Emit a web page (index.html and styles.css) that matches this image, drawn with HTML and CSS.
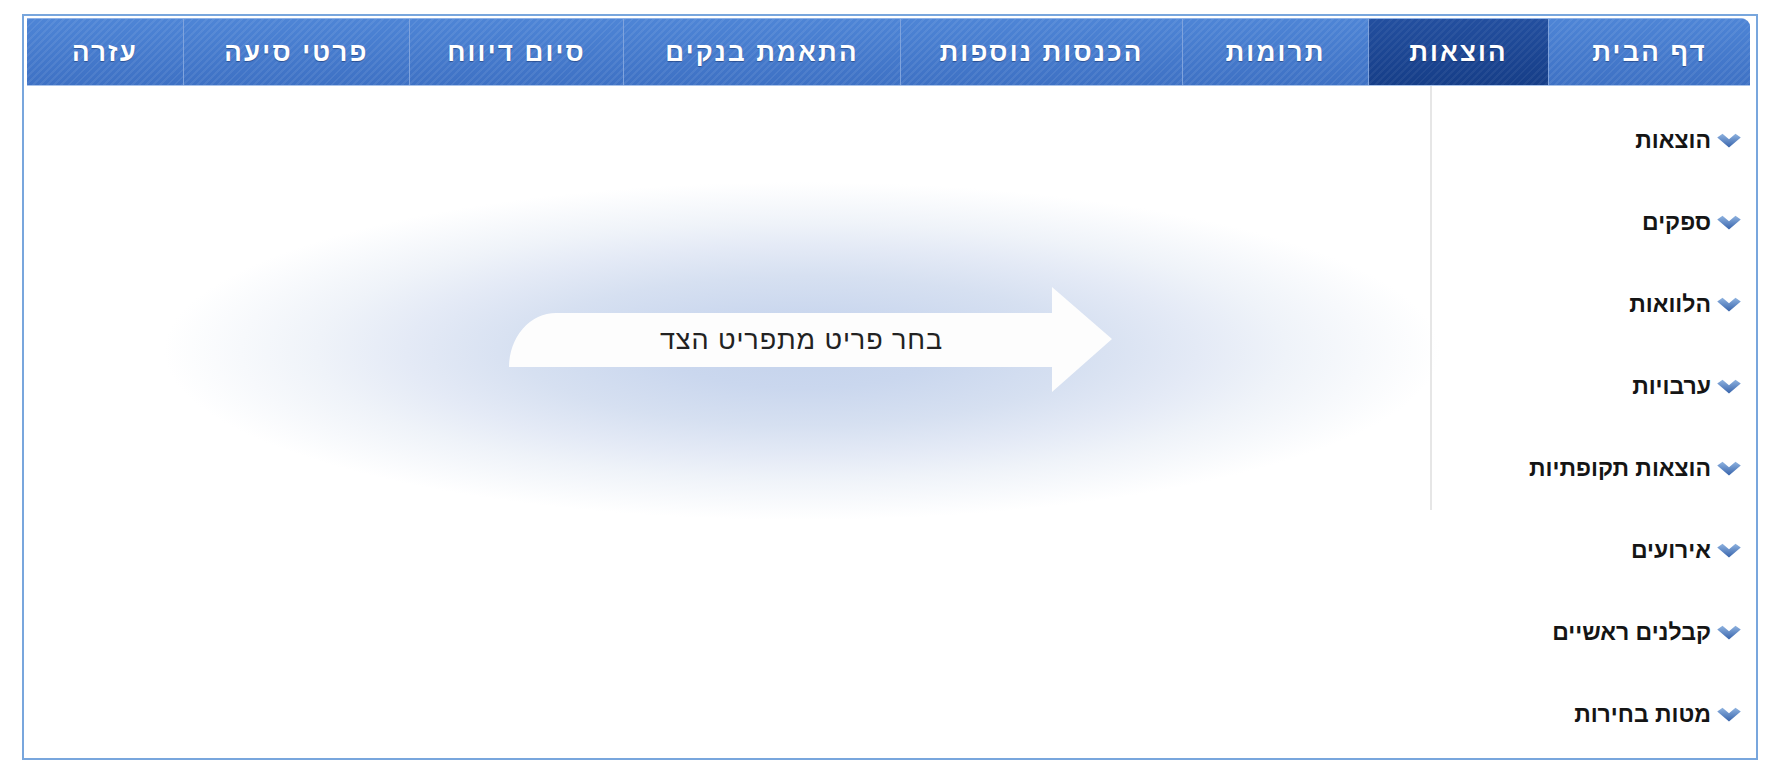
FILE: index.html
```html
<!DOCTYPE html>
<html lang="he">
<head>
<meta charset="utf-8">
<title>תפריט</title>
<link rel="stylesheet" href="styles.css">
</head>
<body>
<div class="frame">
  <nav class="tabs" dir="rtl">
    <div class="tab w-home">דף הבית</div>
    <div class="tab active w-exp">הוצאות</div>
    <div class="tab w-don">תרומות</div>
    <div class="tab w-inc">הכנסות נוספות</div>
    <div class="tab w-bank">התאמת בנקים</div>
    <div class="tab w-end">סיום דיווח</div>
    <div class="tab w-party">פרטי סיעה</div>
    <div class="tab w-help">עזרה</div>
  </nav>
  <div class="content">
    <main class="stage">
      <div class="glow">
        <div class="arrow"><span class="arrow-text" dir="rtl">בחר פריט מתפריט הצד</span></div>
      </div>
    </main>
    <aside class="side" dir="rtl">
      <div class="item"><svg class="chev" viewBox="0 0 20 12"><defs><linearGradient id="cg" x1="0" y1="0" x2="0" y2="1"><stop offset="0" stop-color="#8fb3e0"/><stop offset="1" stop-color="#3763ab"/></linearGradient></defs><path d="M0.2 3.4 L4.6 0.4 L10 5 L15.4 0.4 L19.8 3.4 L10 11.8 Z" fill="url(#cg)"/></svg><span>הוצאות</span></div>
      <div class="item"><svg class="chev" viewBox="0 0 20 12"><path d="M0.2 3.4 L4.6 0.4 L10 5 L15.4 0.4 L19.8 3.4 L10 11.8 Z" fill="url(#cg)"/></svg><span>ספקים</span></div>
      <div class="item"><svg class="chev" viewBox="0 0 20 12"><path d="M0.2 3.4 L4.6 0.4 L10 5 L15.4 0.4 L19.8 3.4 L10 11.8 Z" fill="url(#cg)"/></svg><span>הלוואות</span></div>
      <div class="item"><svg class="chev" viewBox="0 0 20 12"><path d="M0.2 3.4 L4.6 0.4 L10 5 L15.4 0.4 L19.8 3.4 L10 11.8 Z" fill="url(#cg)"/></svg><span>ערבויות</span></div>
      <div class="item"><svg class="chev" viewBox="0 0 20 12"><path d="M0.2 3.4 L4.6 0.4 L10 5 L15.4 0.4 L19.8 3.4 L10 11.8 Z" fill="url(#cg)"/></svg><span>הוצאות תקופתיות</span></div>
      <div class="item"><svg class="chev" viewBox="0 0 20 12"><path d="M0.2 3.4 L4.6 0.4 L10 5 L15.4 0.4 L19.8 3.4 L10 11.8 Z" fill="url(#cg)"/></svg><span>אירועים</span></div>
      <div class="item"><svg class="chev" viewBox="0 0 20 12"><path d="M0.2 3.4 L4.6 0.4 L10 5 L15.4 0.4 L19.8 3.4 L10 11.8 Z" fill="url(#cg)"/></svg><span>קבלנים ראשיים</span></div>
      <div class="item"><svg class="chev" viewBox="0 0 20 12"><path d="M0.2 3.4 L4.6 0.4 L10 5 L15.4 0.4 L19.8 3.4 L10 11.8 Z" fill="url(#cg)"/></svg><span>מטות בחירות</span></div>
    </aside>
  </div>
</div>
</body>
</html>
```

FILE: styles.css
```css
* { box-sizing: border-box; }
html, body { margin: 0; padding: 0; background: #ffffff; }
body { font-family: "Liberation Sans", Arial, "DejaVu Sans", sans-serif; }

.frame {
  margin: 14px 0 0 22px;
  width: 1736px;
  height: 746px;
  border: 2px solid #78a6dd;
  display: flex;
  flex-direction: column;
  background: #fff;
}

.tabs {
  display: flex;
  height: 68px;
  margin: 2px 6px 0 3px;
  border-top-right-radius: 9px;
  overflow: hidden;
  background-color: #4479cc;
  border-top: 1px solid #8fb2e6;
  border-bottom: 1px solid #a9c3ea;
}

.tab {
  display: flex;
  align-items: center;
  justify-content: center;
  color: #fff;
  font-size: 26px;
  letter-spacing: 2.2px;
  font-weight: bold;
  text-shadow: 0 1px 1px rgba(10, 30, 80, 0.45);
  background-image:
    repeating-linear-gradient(135deg, rgba(255,255,255,0.07) 0 2px, rgba(255,255,255,0) 2px 5px),
    linear-gradient(#4e85d6, #3e71c4);
  border-left: 1px solid #7fa3dd;
}
.tab:last-child { border-left: none; }
.tab.active {
  background-image:
    repeating-linear-gradient(135deg, rgba(255,255,255,0.05) 0 2px, rgba(255,255,255,0) 2px 5px),
    linear-gradient(#234f9f, #163e88);
}

.w-home { width: 202px; }
.w-exp { width: 180px; }
.w-don { width: 186px; }
.w-inc { width: 282px; }
.w-bank { width: 277px; }
.w-end { width: 214px; }
.w-party { width: 226px; }
.w-help { width: 156px; }

.content {
  flex: 1;
  display: flex;
}

.stage {
  width: 1406px;
  padding: 96px 0 0 140px;
}

.glow {
  width: 1276px;
  height: 338px;
  padding: 105px 0 0 345px;
  background: radial-gradient(ellipse closest-side at 50% 50%,
    #c5d3ec 0%, #cad7ee 22%, #d6e0f1 44%, #e4eaf6 62%, #eff3f9 76%, #f7f9fc 88%, rgba(255,255,255,0) 100%);
}

.arrow {
  width: 603px;
  height: 105px;
  background: #fdfdfd;
  clip-path: path('M0 80 A47 54 0 0 1 47 26 L543 26 L543 0 L603 52 L543 105 L543 80 Z');
  display: flex;
  align-items: center;
  justify-content: center;
  padding: 2px 18px 0 0;
}

.arrow-text {
  font-size: 27px;
  letter-spacing: 0.9px;
  color: #222;
  font-weight: normal;
}

.side {
  width: 326px;
  padding: 13px 15px 0 0;
  background: linear-gradient(#e6e6e6, #e6e6e6) left top / 2px 424px no-repeat;
}

.item {
  height: 82px;
  display: flex;
  align-items: center;
  gap: 6px;
  font-size: 23px;
  font-weight: bold;
  color: #151515;
}

.chev {
  width: 24px;
  height: 15px;
  flex: none;
}
```
